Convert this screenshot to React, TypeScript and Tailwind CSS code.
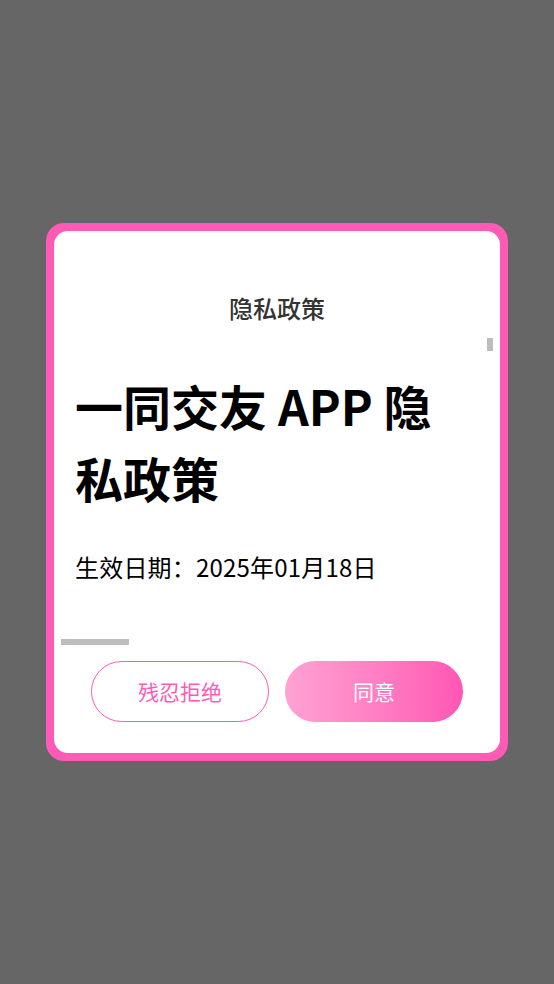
import React from 'react';

const font = { fontFamily: '"Noto Sans CJK SC", "Noto Sans", sans-serif' };

const PrivacyDialog: React.FC = () => (
  <div className="w-[462px] rounded-[18px] bg-[#ff5ab5] p-2">
    <div className="flex flex-col rounded-[14px] bg-white">
      <div className="pt-[59px] text-center text-[24px] font-medium leading-[36px] text-[#333]">隐私政策</div>

      {/* scroll area */}
      <div className="relative h-[324px] px-[21px] pt-[43px] text-black">
        <h1 className="w-[380px] text-[48px] font-bold leading-[72px]">一同交友 APP 隐私政策</h1>
        <p className="mt-[36px] text-[24px] leading-[36px] tracking-[0.2px]">生效日期：2025年01月18日</p>
        <div className="absolute right-[7px] top-[12px] h-[13px] w-[6px] bg-[#bdbdbd]" />
        <div className="absolute left-[7px] top-[313px] h-[6px] w-[68px] bg-[#bdbdbd]" />
      </div>

      <div className="mt-[11px] flex justify-center gap-4 pb-[31px]">
        <button className="h-[61px] w-[178px] rounded-full border border-[#ff5ab5] text-[21px] text-[#ff5ab5]">
          残忍拒绝
        </button>
        <button className="h-[61px] w-[178px] rounded-full bg-gradient-to-r from-[#ffa2d3] to-[#ff56b3] text-[21px] text-white">
          同意
        </button>
      </div>
    </div>
  </div>
);

export default function App() {
  return (
    <div style={font} className="flex h-[984px] w-full items-center justify-center bg-[#666666]">
      <PrivacyDialog />
    </div>
  );
}
